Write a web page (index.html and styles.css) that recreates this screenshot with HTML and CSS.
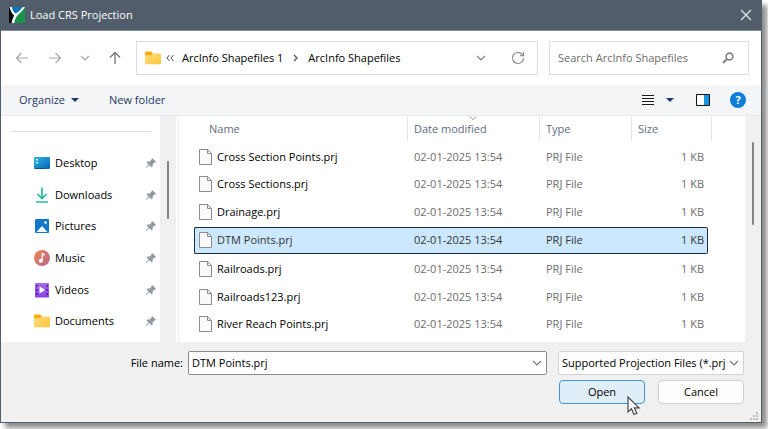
FILE: index.html
```html
<!DOCTYPE html>
<html lang="en">
<head>
    <meta charset="UTF-8">
    <meta name="viewport" content="width=device-width, initial-scale=1.0">
    <title>Load CRS Projection</title>
    <link rel="stylesheet" href="styles.css">
</head>
<body>
    <!-- Shared icons -->
    <svg class="symbols" aria-hidden="true">
        <defs>
            <linearGradient id="folderFill" x1="0" y1="0" x2="1" y2="1">
                <stop offset="0" stop-color="#ffe08a"/>
                <stop offset="1" stop-color="#fdc334"/>
            </linearGradient>
            <linearGradient id="blueFill" x1="0" y1="0" x2="1" y2="1">
                <stop offset="0" stop-color="#2bb8e0"/>
                <stop offset="1" stop-color="#0a62b8"/>
            </linearGradient>
            <linearGradient id="musicFill" x1="0" y1="0" x2="1" y2="1">
                <stop offset="0" stop-color="#ee8a52"/>
                <stop offset="1" stop-color="#b9628c"/>
            </linearGradient>
            <linearGradient id="videoFill" x1="0" y1="0" x2="0" y2="1">
                <stop offset="0" stop-color="#a56be6"/>
                <stop offset="1" stop-color="#8a3fe0"/>
            </linearGradient>
        </defs>
        <symbol id="folder" viewBox="0 0 16 16">
            <path d="M0 3.2C0 2.2.6 1.6 1.6 1.6h4.6L8 3.4v3H0z" fill="#f5ab0c"/>
            <path d="M0 5.2h6.4L8 3.4h6.6c.9 0 1.4.5 1.4 1.4v8c0 .9-.5 1.4-1.4 1.4H1.4c-.9 0-1.4-.5-1.4-1.4z" fill="url(#folderFill)"/>
        </symbol>
        <symbol id="pin" viewBox="0 0 12 12">
            <path d="M7.2 1 11 4.800 10.300 5.600 9.500 5.500 7.600 7.400 7.700 9.600 6.800 10.400 4.400 8.200 1.200 11 .8 10.600 3.600 7.500 1.500 5.400 2.300 4.500 4.700 4.400 6.700 2.500 6.400 1.700z" fill="#8f9ba3"/>
        </symbol>
        <symbol id="chevron" viewBox="0 0 10 10">
            <path d="M1 3l4 4 4-4" fill="none" stroke="currentColor" stroke-width="1.2"/>
        </symbol>
        <symbol id="page" viewBox="0 0 13 16">
            <path d="M.5.5h8l4 4v11H.5z" fill="#fafafa" stroke="#8c8c8c"/>
            <path d="M8.500.5v4h4" fill="none" stroke="#8c8c8c"/>
        </symbol>
    </svg>

    <main class="dialog">
        <!-- Title bar -->
        <header class="title-bar">
            <svg class="icon-16" viewBox="0 0 16 16">
                <path d="M0 0h16v16H0z" fill="#17944a"/>
                <path d="M3 0h13v.5L8 9 4 6z" fill="#0b73c0"/>
                <path d="M0 0h1l4 8-2 8H0z" fill="#000"/>
                <path d="M.5 0h2.300c.8 3.300 2 5.600 4 6.600C9.500 5 12 2.500 13.800 0H16c-2.500 4-6 6.500-8.300 9.500C6.300 11.500 5.600 13.500 5.300 16H2.500c.6-3 1.500-5.200 2.800-7.300C3 6.700 1.300 3.500.5 0z" fill="#fff"/>
            </svg>
            <h1>Load CRS Projection</h1>
            <button class="close" type="button" aria-label="Close">
                <svg width="12" height="12" viewBox="0 0 12 12"><path d="M1 1l10 10M11 1L1 11" stroke="#e4e7ea" stroke-width="1.200"/></svg>
            </button>
        </header>

        <!-- Navigation -->
        <nav class="nav-bar">
            <div class="history">
                <button type="button" aria-label="Back"><svg width="14" height="12" viewBox="0 0 14 12"><path d="M13 6H2M6.500 1L1.500 6l5 5" fill="none" stroke="#a6a6a6" stroke-width="1.200"/></svg></button>
                <button type="button" aria-label="Forward"><svg width="14" height="12" viewBox="0 0 14 12"><path d="M1 6h11M7.500 1l5 5-5 5" fill="none" stroke="#a6a6a6" stroke-width="1.200"/></svg></button>
                <button type="button" aria-label="Recent locations"><svg class="icon-10 pale"><use href="#chevron"/></svg></button>
                <button type="button" aria-label="Up"><svg width="12" height="14" viewBox="0 0 12 14"><path d="M6 13V2M1 6.500l5-5 5 5" fill="none" stroke="#777" stroke-width="1.300"/></svg></button>
            </div>
            <div class="address">
                <svg class="icon-16"><use href="#folder"/></svg>
                <svg class="crumb-back" width="8" height="8" viewBox="0 0 8 8"><path d="M3.500 1L1 4l2.500 3M7.500 1L5 4l2.500 3" fill="none" stroke="#555"/></svg>
                <a href="#">ArcInfo Shapefiles 1</a>
                <svg class="crumb-next" width="5" height="8" viewBox="0 0 5 8"><path d="M1 1l3 3-3 3" fill="none" stroke="#555" stroke-width="1.300"/></svg>
                <a href="#">ArcInfo Shapefiles</a>
                <button class="address-drop" type="button" aria-label="Previous locations"><svg class="icon-10 grey"><use href="#chevron"/></svg></button>
                <button type="button" aria-label="Refresh"><svg width="14" height="14" viewBox="0 0 14 14"><path d="M12.500 7A5.500 5.500 0 1 1 11 3.200l1.300 1.300M12.500 1v3.600H9" fill="none" stroke="#8c8c8c" stroke-width="1.200"/></svg></button>
            </div>
            <div class="search">
                <input type="search" placeholder="Search ArcInfo Shapefiles" aria-label="Search ArcInfo Shapefiles">
                <svg width="12" height="12" viewBox="0 0 12 12"><circle cx="7.500" cy="4.500" r="3.400" fill="none" stroke="#808080" stroke-width="1.600"/><path d="M5 7L1 11" stroke="#808080" stroke-width="2"/></svg>
            </div>
        </nav>

        <!-- Commands -->
        <div class="tool-bar">
            <button type="button">Organize <svg width="8" height="4" viewBox="0 0 8 4"><path d="M0 0h8L4 4z" fill="#1d3a66"/></svg></button>
            <button type="button">New folder</button>
            <div class="view-tools">
                <button type="button" aria-label="List view"><svg width="12" height="12" viewBox="0 0 12 12"><path d="M0 1.500h12M0 4.500h12M0 7.500h12M0 10.500h12" stroke="#1a1a1a"/></svg></button>
                <button class="more" type="button" aria-label="More views"><svg width="8" height="4" viewBox="0 0 8 4"><path d="M0 0h8L4 4z" fill="#1d3a66"/></svg></button>
                <button class="preview" type="button" aria-label="Preview pane"><svg width="14" height="12" viewBox="0 0 14 12"><path d="M.5.5h13v11H.5z" fill="#fff" stroke="#111"/><path d="M8 1h5v10H8z" fill="#1b95e0"/></svg></button>
                <button type="button" aria-label="Help"><span class="help">?</span></button>
            </div>
        </div>

        <div class="content">
            <!-- Places -->
            <aside class="places">
                <ul>
                    <li>
                        <svg class="icon-16" viewBox="0 0 16 16"><rect y="2" width="16" height="12" rx="1" fill="url(#blueFill)"/><path d="M2 4h2v1.500H2zM2 7h2v1.500H2z" fill="#d7f5fb"/><path d="M1 13h10v1H1z" fill="#0c4d82"/></svg>
                        <a href="#">Desktop</a>
                        <svg class="pin"><use href="#pin"/></svg>
                    </li>
                    <li>
                        <svg class="icon-16" viewBox="0 0 16 16"><path d="M8 .5v11M3.500 7L8 11.500 12.500 7M2 15h12" fill="none" stroke="#24bb98" stroke-width="1.700"/></svg>
                        <a href="#">Downloads</a>
                        <svg class="pin"><use href="#pin"/></svg>
                    </li>
                    <li>
                        <svg class="icon-16" viewBox="0 0 16 16"><rect x="1" y="1" width="14" height="14" rx="1" fill="#1478c8"/><path d="M2.500 14L8 8l5.500 6z" fill="#fff"/><circle cx="11.500" cy="4.500" r="1.300" fill="#fff"/></svg>
                        <a href="#">Pictures</a>
                        <svg class="pin"><use href="#pin"/></svg>
                    </li>
                    <li>
                        <svg class="icon-16" viewBox="0 0 16 16"><circle cx="8" cy="8" r="8" fill="url(#musicFill)"/><circle cx="6.800" cy="10.700" r="2" fill="#fff"/><path d="M7.600 3h1.200l2 1.200v1.600l-2-.8v5.700H7.600z" fill="#fff"/></svg>
                        <a href="#">Music</a>
                        <svg class="pin"><use href="#pin"/></svg>
                    </li>
                    <li>
                        <svg class="icon-16" viewBox="0 0 16 16"><rect x="1" y="1" width="14" height="14.500" rx="1" fill="url(#videoFill)"/><path d="M2.800 3v11M13.200 3v11" stroke="#4d1c99" stroke-width="1.600" stroke-dasharray="1.700 2.300"/><path d="M5.500 4.500v7L11.200 8z" fill="#fff"/></svg>
                        <a href="#">Videos</a>
                        <svg class="pin"><use href="#pin"/></svg>
                    </li>
                    <li>
                        <svg class="icon-16"><use href="#folder"/></svg>
                        <a href="#">Documents</a>
                        <svg class="pin"><use href="#pin"/></svg>
                    </li>
                </ul>
            </aside>
            <div class="scroll scroll-places"><span></span></div>

            <!-- File list -->
            <section class="files">
                <table>
                    <thead>
                        <tr>
                            <th class="name">Name</th>
                            <th class="date">Date modified <svg class="sort"><use href="#chevron"/></svg></th>
                            <th class="type">Type</th>
                            <th class="size">Size</th>
                            <th class="end"></th>
                        </tr>
                    </thead>
                    <tbody>
                        <tr>
                            <td><svg class="page"><use href="#page"/></svg>Cross Section Points.prj</td>
                            <td>02-01-2025 13:54</td>
                            <td>PRJ File</td>
                            <td>1 KB</td>
                        </tr>
                        <tr>
                            <td><svg class="page"><use href="#page"/></svg>Cross Sections.prj</td>
                            <td>02-01-2025 13:54</td>
                            <td>PRJ File</td>
                            <td>1 KB</td>
                        </tr>
                        <tr>
                            <td><svg class="page"><use href="#page"/></svg>Drainage.prj</td>
                            <td>02-01-2025 13:54</td>
                            <td>PRJ File</td>
                            <td>1 KB</td>
                        </tr>
                        <tr class="selected">
                            <td><svg class="page"><use href="#page"/></svg>DTM Points.prj</td>
                            <td>02-01-2025 13:54</td>
                            <td>PRJ File</td>
                            <td>1 KB</td>
                        </tr>
                        <tr>
                            <td><svg class="page"><use href="#page"/></svg>Railroads.prj</td>
                            <td>02-01-2025 13:54</td>
                            <td>PRJ File</td>
                            <td>1 KB</td>
                        </tr>
                        <tr>
                            <td><svg class="page"><use href="#page"/></svg>Railroads123.prj</td>
                            <td>02-01-2025 13:54</td>
                            <td>PRJ File</td>
                            <td>1 KB</td>
                        </tr>
                        <tr>
                            <td><svg class="page"><use href="#page"/></svg>River Reach Points.prj</td>
                            <td>02-01-2025 13:54</td>
                            <td>PRJ File</td>
                            <td>1 KB</td>
                        </tr>
                    </tbody>
                </table>
            </section>
            <div class="scroll scroll-files"><span></span></div>
        </div>

        <!-- File name and buttons -->
        <form class="footer">
            <div class="fields">
                <label for="fileName">File name:</label>
                <div class="combo combo-name">
                    <input type="text" id="fileName" value="DTM Points.prj">
                    <svg class="icon-10"><use href="#chevron"/></svg>
                </div>
                <div class="combo combo-type">
                    <select id="fileType" aria-label="File type">
                        <option>Supported Projection Files (*.prj)</option>
                    </select>
                    <svg class="icon-10"><use href="#chevron"/></svg>
                </div>
            </div>
            <div class="actions">
                <button class="open" type="button">Open
                    <svg class="pointer" width="14" height="20" viewBox="0 0 14 20"><path d="M1 1v15l3.500-3.200L7 18.500l2.800-1.200-2.500-5.500H12z" fill="#fff" stroke="#45454f" stroke-width="1.200"/></svg>
                </button>
                <button type="button">Cancel</button>
            </div>
            <svg class="grip" width="8" height="8" viewBox="0 0 8 8"><path d="M6 0h2v2H6zM3 3h2v2H3zM6 3h2v2H6zM0 6h2v2H0zM3 6h2v2H3zM6 6h2v2H6z" fill="#bdbdbd"/></svg>
        </form>
    </main>
</body>
</html>
```
FILE: styles.css
```css
* {
    box-sizing: border-box;
}
body {
    margin: 0;
    height: 100vh;
    padding: 0 6px 6px 0;
    background: #fff;
    font-family: "Open Sans", "Noto Sans", sans-serif;
    font-size: 11px;
    line-height: 16px;
    color: #000;
    overflow: hidden;
}
button,
input,
select {
    font: inherit;
    color: inherit;
}
button {
    padding: 0;
    border: none;
    background: none;
}
a {
    color: inherit;
    text-decoration: none;
}
svg {
    display: block;
    flex: none;
}
.symbols {
    position: absolute;
    width: 0;
    height: 0;
}
.icon-16 {
    width: 16px;
    height: 16px;
}
.icon-10 {
    width: 10px;
    height: 10px;
    color: #777;
}
.icon-10.pale {
    color: #a6a6a6;
}
.icon-10.grey {
    color: #808080;
}

.dialog {
    display: flex;
    flex-direction: column;
    height: 100%;
    border: 1px solid #525d6b;
    border-top: none;
    background: #f0f0f0;
    box-shadow: 5px 5px 5px rgba(0, 0, 0, 0.45);
}

/* Title bar */
.title-bar {
    display: flex;
    align-items: center;
    gap: 5px;
    height: 31px;
    padding: 0 9px 0 8px;
    background: #525d6b;
    border-bottom: 1px solid #7f8894;
    color: #fff;
}
.title-bar h1 {
    margin: 0;
    font-size: 11px;
    font-weight: normal;
}
.close {
    margin-left: auto;
}

/* Navigation */
.nav-bar {
    display: flex;
    align-items: center;
    height: 54px;
    padding: 0 12px 0 14px;
    background: #fff;
}
.history {
    display: flex;
    align-items: center;
    justify-content: space-between;
    width: 106px;
    margin-right: 15px;
}
.address,
.search {
    display: flex;
    align-items: center;
    height: 34px;
    border: 1px solid #dedede;
    background: #fff;
}
.address {
    flex: 1;
    padding: 0 12px 0 8px;
}
.crumb-back {
    margin: 0 8px 0 5px;
}
.crumb-next {
    margin: 0 10px;
}
.address-drop {
    margin: 0 25px 0 auto;
}
.search {
    width: 200px;
    margin-left: 11px;
    padding: 0 14px 0 8px;
}
.search input {
    flex: 1;
    min-width: 0;
    padding: 0;
    border: none;
    outline: none;
    background: none;
}
.search input::placeholder {
    color: #6d6d6d;
    opacity: 1;
}

/* Commands */
.tool-bar {
    display: flex;
    align-items: center;
    gap: 30px;
    height: 31px;
    padding: 0 15px 0 18px;
    background: #f4f5f7;
    border-bottom: 1px solid #e9ebee;
    color: #1d3a66;
}
.tool-bar button {
    display: flex;
    align-items: center;
    gap: 6px;
}
.view-tools {
    display: flex;
    align-items: center;
    margin-left: auto;
}
.view-tools .more {
    margin: 0 22px 0 12px;
}
.view-tools .preview {
    margin-right: 20px;
}
.help {
    width: 16px;
    border-radius: 50%;
    background: #0f7fd6;
    color: #fff;
    font-weight: bold;
    text-align: center;
}

.content {
    display: flex;
    flex: 1;
    min-height: 0;
    background: #fff;
}

/* Places */
.places {
    display: flex;
    flex-direction: column;
    width: 159px;
}
.places::before {
    content: "";
    height: 1px;
    margin: 15px 9px 0 10px;
    background: #dcdcdc;
}
.places ul {
    display: flex;
    flex: 1;
    flex-direction: column;
    margin: 15px 0 5px;
    padding: 0 3px 0 33px;
    list-style: none;
}
.places li {
    display: flex;
    flex: 1;
    align-items: center;
    gap: 5px;
}
.pin {
    width: 12px;
    height: 12px;
    margin-left: auto;
}
.scroll {
    display: flex;
    justify-content: center;
    background: #f0f0f0;
}
.scroll span {
    width: 2px;
    border-radius: 1px;
    background: #858585;
}
.scroll-places {
    width: 16px;
}
.scroll-places span {
    height: 58px;
    margin-top: 45px;
}
.scroll-files {
    width: 16px;
}
.scroll-files span {
    height: 83px;
    margin-top: 26px;
}

/* File list */
.files {
    flex: 1;
    margin-left: 2px;
    padding: 0 33px 0 15px;
    border-left: 1px solid #f0f0f0;
    overflow: hidden;
}
table {
    width: 100%;
    height: 228px;
    margin-top: -4px;
    table-layout: fixed;
    border-spacing: 0 4px;
}
th {
    height: 25px;
    padding: 0 6px;
    border-right: 1px solid #e5e5e5;
    color: #5d6b80;
    font-weight: normal;
    text-align: left;
}
th.name {
    padding-left: 15px;
}
th.date {
    position: relative;
    width: 132px;
}
th.type {
    width: 92px;
}
th.size {
    width: 76px;
    border-right: none;
}
th.end {
    width: 4px;
    padding: 0;
}
.sort {
    position: absolute;
    top: -2px;
    left: 61px;
    width: 8px;
    height: 8px;
    color: #888;
}
td {
    padding: 0 6px;
    color: #6d6d6d;
    white-space: nowrap;
}
td:first-child {
    padding-left: 5px;
    color: #000;
}
td:last-child {
    padding-right: 4px;
    text-align: right;
}
.page {
    display: inline-block;
    width: 13px;
    height: 16px;
    margin-right: 5px;
    vertical-align: top;
}
.selected td {
    border: solid #1f2b36;
    border-width: 1px 0;
    background: #cce8ff;
    color: #333;
}
.selected td:first-child {
    padding-left: 4px;
    border-left-width: 1px;
    border-radius: 2px 0 0 2px;
}
.selected td:last-child {
    padding-right: 3px;
    border-right-width: 1px;
    border-radius: 0 2px 2px 0;
}

/* File name and buttons */
.footer {
    position: relative;
    height: 80px;
    padding: 9px 17px 0 0;
}
.fields {
    display: flex;
    align-items: center;
}
.fields label {
    width: 182px;
    margin-right: 5px;
    text-align: right;
}
.combo {
    display: flex;
    align-items: center;
    height: 24px;
    padding-right: 4px;
    border: 1px solid #d2d2d2;
    border-radius: 2px;
    background: #fdfdfd;
}
.combo input,
.combo select {
    flex: 1;
    min-width: 0;
    padding: 0 3px;
    border: none;
    outline: none;
    background: none;
    appearance: none;
}
.combo-name {
    flex: 1;
    border-color: #8a8a8a;
    background: #fff;
}
.combo-type {
    width: 186px;
    margin-left: 11px;
}
.combo-type select {
    margin-right: 4px;
    padding-right: 0;
    text-overflow: clip;
}
.actions {
    display: flex;
    justify-content: flex-end;
    gap: 13px;
    margin-top: 5px;
}
.actions button {
    position: relative;
    width: 86px;
    height: 24px;
    border: 1px solid #d0d0d0;
    border-radius: 4px;
    background: #fdfdfd;
}
.actions .open {
    border-color: #3f97dc;
    background: #e0eef9;
}
.pointer {
    position: absolute;
    top: 15px;
    left: 67px;
}
.grip {
    position: absolute;
    right: 3px;
    bottom: 2px;
}
```
